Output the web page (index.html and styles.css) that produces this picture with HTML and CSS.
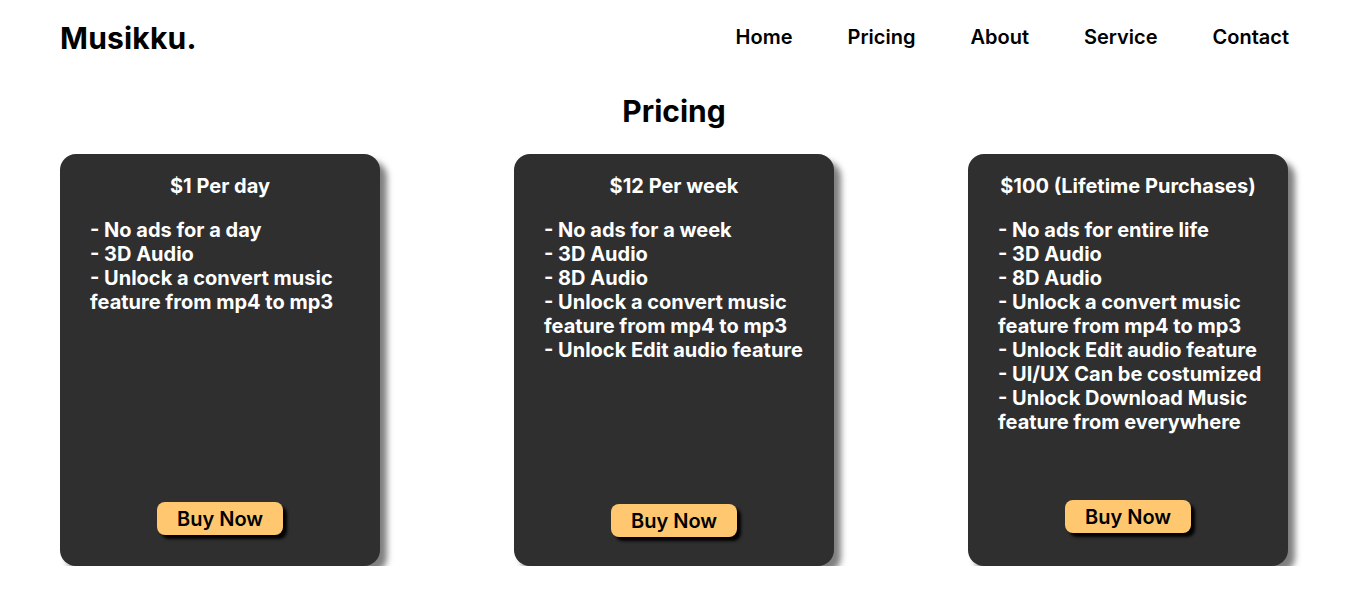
FILE: index.html
```html
<!DOCTYPE html>
<html lang="en">
<head>
<meta charset="utf-8">
<title>Musikku. Pricing</title>
<link rel="stylesheet" href="styles.css">
</head>
<body>
<header class="topbar">
  <div class="logo">Musikku.</div>
  <nav class="nav">
    <a href="#">Home</a>
    <a href="#">Pricing</a>
    <a href="#">About</a>
    <a href="#">Service</a>
    <a href="#">Contact</a>
  </nav>
</header>
<main class="pricing">
  <h1 class="pricing-title">Pricing</h1>
  <div class="cards">
    <div class="card">
      <h2 class="card-title">$1 Per day</h2>
      <ul class="features">
        <li>- No ads for a day</li>
        <li>- 3D Audio</li>
        <li>- Unlock a convert music feature from mp4 to mp3</li>
      </ul>
      <button class="buy b1">Buy Now</button>
    </div>
    <div class="card">
      <h2 class="card-title">$12 Per week</h2>
      <ul class="features">
        <li>- No ads for a week</li>
        <li>- 3D Audio</li>
        <li>- 8D Audio</li>
        <li>- Unlock a convert music feature from mp4 to mp3</li>
        <li>- Unlock Edit audio feature</li>
      </ul>
      <button class="buy b2">Buy Now</button>
    </div>
    <div class="card">
      <h2 class="card-title">$100 (Lifetime Purchases)</h2>
      <ul class="features">
        <li>- No ads for entire life</li>
        <li>- 3D Audio</li>
        <li>- 8D Audio</li>
        <li>- Unlock a convert music feature from mp4 to mp3</li>
        <li>- Unlock Edit audio feature</li>
        <li>- UI/UX Can be costumized</li>
        <li>- Unlock Download Music feature from everywhere</li>
      </ul>
      <button class="buy b3">Buy Now</button>
    </div>
  </div>
</main>
</body>
</html>
```

FILE: styles.css
```css
* { box-sizing: border-box; }
html, body { margin: 0; padding: 0; background: #fff; }
body {
  font-family: Inter, "Noto Sans", "Liberation Sans", sans-serif;
  color: #000;
}
.topbar {
  display: flex;
  justify-content: space-between;
  align-items: center;
  padding: 4px 58px 0 60px;
  height: 72px;
}
.logo {
  font-size: 30px;
  font-weight: 700;
  letter-spacing: 0.2px;
  margin-top: 0;
}
.nav {
  display: flex;
  gap: 55px;
  margin-top: -2px;
}
.nav a {
  color: #000;
  text-decoration: none;
  font-size: 20px;
  font-weight: 600;
}
.pricing { padding: 0 59px 0 60px; }
.pricing-title {
  margin: 19px 0 0;
  text-align: center;
  font-size: 30px;
  font-weight: 700;
  line-height: 40px;
}
.cards {
  display: flex;
  justify-content: space-between;
  margin-top: 23px;
}
.card {
  width: 320px;
  height: 412px;
  background: #2f2f2f;
  border-radius: 16px;
  box-shadow: 7px 7px 6px rgba(0, 0, 0, 0.5);
  color: #fff;
  padding: 20px 24px 0 30px;
  display: flex;
  flex-direction: column;
}
.card-title {
  margin: 0;
  padding-right: 6px;
  text-align: center;
  font-size: 20px;
  font-weight: 700;
  line-height: 24px;
}
.features {
  list-style: none;
  margin: 20px 0 0;
  padding: 0;
  font-size: 20px;
  font-weight: 700;
  line-height: 24px;
}
.buy {
  align-self: center;
  margin-right: 6px;
  background: #ffc870;
  color: #000;
  border: none;
  border-radius: 8px;
  font-family: inherit;
  font-size: 20px;
  font-weight: 600;
  width: 126px;
  height: 33px;
  box-shadow: 4px 4px 3px rgba(0, 0, 0, 0.95);
  margin-top: auto;
  cursor: pointer;
}
.b1 { margin-bottom: 31px; }
.b2 { margin-bottom: 29px; }
.b3 { margin-bottom: 33px; }
```
